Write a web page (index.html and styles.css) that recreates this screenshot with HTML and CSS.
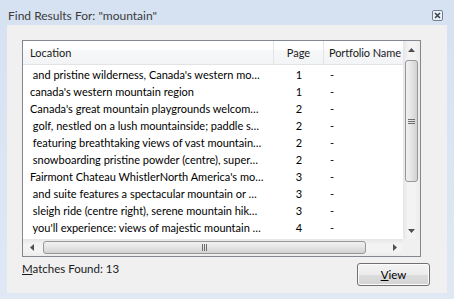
FILE: index.html
```html
<!DOCTYPE html>
<html lang="en">
<head>
    <meta charset="UTF-8">
    <title>Find Results</title>
    <link rel="stylesheet" href="styles.css">
</head>
<body>
<div class="window">
    <div class="titlebar">
        <span class="title">Find Results For: "mountain"</span>
        <span class="close">
            <svg width="11" height="11" viewBox="0 0 11 11">
                <rect x="0.5" y="0.5" width="10" height="10" rx="1.5" fill="#eef2f7" stroke="#6f7f96"/>
                <path d="M3 3 L8 8 M8 3 L3 8" stroke="#3a4452" stroke-width="1.6"/>
            </svg>
        </span>
    </div>

    <div class="panel">
        <div class="list">
            <div class="view">
                <div class="head">
                    <div class="hcell loc">Location</div>
                    <div class="hcell page">Page</div>
                    <div class="hcell port">Portfolio Name</div>
                </div>
                <div class="rows">
                    <div class="row"><span class="loc"> and pristine wilderness, Canada's western mo…</span><span class="page">1</span><span class="port">-</span></div>
                    <div class="row"><span class="loc">canada's western mountain region</span><span class="page">1</span><span class="port">-</span></div>
                    <div class="row"><span class="loc">Canada's great mountain playgrounds welcom…</span><span class="page">2</span><span class="port">-</span></div>
                    <div class="row"><span class="loc"> golf, nestled on a lush mountainside; paddle s…</span><span class="page">2</span><span class="port">-</span></div>
                    <div class="row"><span class="loc"> featuring breathtaking views of vast mountain…</span><span class="page">2</span><span class="port">-</span></div>
                    <div class="row"><span class="loc"> snowboarding pristine powder (centre), super…</span><span class="page">2</span><span class="port">-</span></div>
                    <div class="row"><span class="loc">Fairmont Chateau WhistlerNorth America's mo…</span><span class="page">3</span><span class="port">-</span></div>
                    <div class="row"><span class="loc"> and suite features a spectacular mountain or …</span><span class="page">3</span><span class="port">-</span></div>
                    <div class="row"><span class="loc"> sleigh ride (centre right), serene mountain hik…</span><span class="page">3</span><span class="port">-</span></div>
                    <div class="row"><span class="loc"> you'll experience: views of majestic mountain …</span><span class="page">4</span><span class="port">-</span></div>
                </div>
            </div>

            <div class="vscroll">
                <div class="arrow">
                    <svg width="7" height="4" viewBox="0 0 7 4"><path d="M0 4 L3.5 0 L7 4 Z" fill="#505050"/></svg>
                </div>
                <div class="vtrack">
                    <div class="vthumb">
                        <svg width="7" height="5" viewBox="0 0 7 5"><path d="M0 0.5 H7 M0 2.5 H7 M0 4.5 H7" stroke="#6e6e6e"/></svg>
                    </div>
                </div>
                <div class="arrow">
                    <svg width="7" height="4" viewBox="0 0 7 4"><path d="M0 0 L3.5 4 L7 0 Z" fill="#505050"/></svg>
                </div>
            </div>

            <div class="hscroll">
                <div class="arrow">
                    <svg width="4" height="7" viewBox="0 0 4 7"><path d="M4 0 L0 3.5 L4 7 Z" fill="#505050"/></svg>
                </div>
                <div class="htrack">
                    <div class="hthumb">
                        <svg width="5" height="7" viewBox="0 0 5 7"><path d="M0.5 0 V7 M2.5 0 V7 M4.5 0 V7" stroke="#6e6e6e"/></svg>
                    </div>
                </div>
                <div class="arrow">
                    <svg width="4" height="7" viewBox="0 0 4 7"><path d="M0 0 L4 3.5 L0 7 Z" fill="#505050"/></svg>
                </div>
            </div>

            <div class="corner"></div>
        </div>

        <div class="footer">
            <span class="matches"><u>M</u>atches Found: 13</span>
            <button class="btn"><u>V</u>iew</button>
        </div>
    </div>
</div>
</body>
</html>
```
FILE: styles.css
```css
body {
    margin: 0;
    font-family: Lato, "Open Sans", sans-serif;
    font-size: 11px;
    color: #000;
}

.window {
    width: 454px;
    height: 299px;
    box-sizing: border-box;
    padding: 0 7px 6px 7px;
    background: linear-gradient(#d6e2f1, #dfe8f4);
    display: flex;
    flex-direction: column;
}

.titlebar {
    height: 25px;
    display: flex;
    justify-content: space-between;
    align-items: flex-start;
    padding: 8px 4px 0 1px;
    box-sizing: border-box;
}
.title {
    font-size: 12px;
    line-height: 16px;
    color: #3b3b3b;
}
.close {
    margin-top: 2px;
    height: 11px;
}
.close svg { display: block; }

.panel {
    flex: 1;
    background: #f0f0f0;
    padding: 15px 17px 0 15px;
}

.list {
    width: 399px;
    height: 217px;
    box-sizing: border-box;
    border: 1px solid #828790;
    background: #fff;
    display: grid;
    grid-template-columns: 380px 17px;
    grid-template-rows: 198px 17px;
}

.view {
    overflow: hidden;
}
.head {
    display: flex;
    height: 24px;
    box-sizing: border-box;
    border-bottom: 1px solid #e2e3e5;
    background: linear-gradient(#ffffff 40%, #f6f7f8 40%, #f3f4f6);
    line-height: 23px;
    color: #1a1a1a;
}
.hcell {
    box-sizing: border-box;
    border-right: 1px solid #e3e4e6;
    white-space: nowrap;
    overflow: hidden;
}
.hcell.port {
    border-right: none;
    padding-left: 5px;
    letter-spacing: -0.1px;
}

.loc { width: 251px; padding-left: 7px; }
.page { width: 50px; text-align: center; }
.port { width: 79px; padding-left: 6px; }

.rows { padding-top: 1px; }
.row {
    display: flex;
    height: 17px;
    line-height: 17px;
}
.row span {
    box-sizing: border-box;
    white-space: pre;
    overflow: hidden;
}

.vscroll {
    display: flex;
    flex-direction: column;
    background: linear-gradient(to right, #e6e6e6, #f3f3f3 30%, #f3f3f3 70%, #ececec);
}
.hscroll {
    display: flex;
    background: linear-gradient(#e6e6e6, #f3f3f3 30%, #f3f3f3 70%, #ececec);
}
.arrow {
    width: 17px;
    height: 17px;
    flex: none;
    display: flex;
    align-items: center;
    justify-content: center;
}
.arrow svg { display: block; }

.vtrack {
    flex: 1;
    padding: 2px 2px 0 2px;
}
.vthumb {
    height: 122px;
    box-sizing: border-box;
    border: 1px solid #979797;
    border-radius: 3px;
    background: linear-gradient(to right, #f1f1f1, #e4e4e4 50%, #d2d2d2);
    display: flex;
    align-items: center;
    justify-content: center;
}
.htrack {
    flex: 1;
    padding: 2px 0 2px 3px;
}
.hthumb {
    width: 323px;
    height: 13px;
    box-sizing: border-box;
    border: 1px solid #979797;
    border-radius: 3px;
    background: linear-gradient(#f1f1f1, #e4e4e4 50%, #d2d2d2);
    display: flex;
    align-items: center;
    justify-content: center;
}
.vthumb svg, .hthumb svg { display: block; }

.corner {
    background: #f0f0f0;
}

.footer {
    display: flex;
    justify-content: space-between;
    align-items: flex-start;
    margin-top: 4px;
}
.matches {
    font-size: 11.5px;
    line-height: 16px;
    color: #1a1a1a;
}
.btn {
    margin-top: 2px;
    width: 73px;
    height: 23px;
    border: 1px solid #707070;
    border-radius: 3px;
    background: linear-gradient(#f4f4f4, #ececec 50%, #dddddd 50%, #d3d3d3);
    box-shadow: inset 0 0 0 1px #fcfcfc;
    font-family: inherit;
    font-size: 11.5px;
    color: #000;
    padding: 0;
}
```
